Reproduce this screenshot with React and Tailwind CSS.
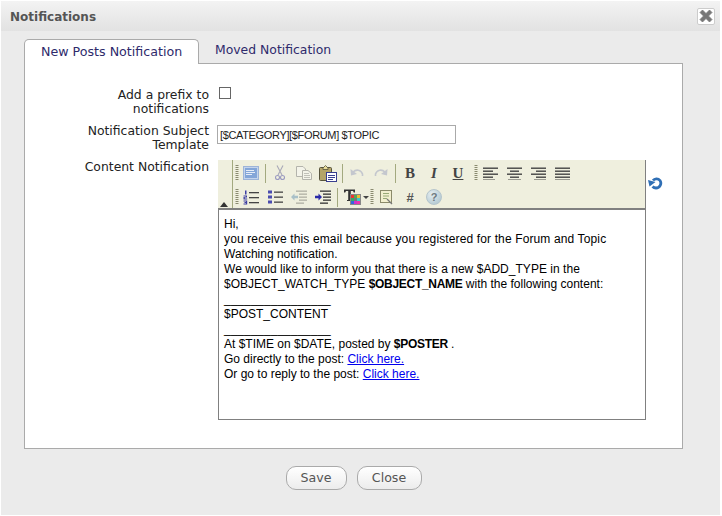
const Grip = () => (
  <svg width="4" height="16" viewBox="0 0 4 16" className="shrink-0">
    {[0, 2, 4, 6, 8, 10, 12, 14].map((y) => (
      <rect key={y} x="0.5" y={y} width="3" height="1" fill="#8a8a70" />
    ))}
  </svg>
);

const Sep = () => <div className="w-px h-[19px] bg-[#a3a97f] mx-[2px] shrink-0" />;

const Btn = ({ children, w = "w-[24px]" }) => (
  <div className={`${w} h-[22px] flex items-center justify-center shrink-0`}>{children}</div>
);

const Lines = ({ rows, color = "#444" }) => (
  <svg width="15" height="13" viewBox="0 0 15 13">
    {rows.map(([x, w], i) => (
      <rect key={i} x={x} y={i * 3 + 0.5} width={w} height="1.4" fill={color} />
    ))}
  </svg>
);

const FULL = [[0, 15], [0, 15], [0, 15], [0, 15], [0, 15]];
const LEFT = [[0, 15], [0, 10], [0, 15], [0, 10], [0, 12]];
const CENTER = [[0, 15], [3, 9], [0, 15], [3, 9], [1, 13]];
const RIGHT = [[0, 15], [5, 10], [0, 15], [5, 10], [3, 12]];

const Source = () => (
  <svg width="16" height="14" viewBox="0 0 16 14">
    <rect x="0.5" y="0.5" width="15" height="13" fill="#c4d4ec" stroke="#9db4d8" />
    <rect x="2" y="2" width="12" height="10" fill="#84a6d8" />
    <rect x="3" y="4" width="8" height="1" fill="#e6edf7" />
    <rect x="3" y="6" width="9" height="1" fill="#e6edf7" />
    <rect x="3" y="8" width="6" height="1" fill="#e6edf7" />
  </svg>
);

const Scissors = () => (
  <svg width="10" height="16" viewBox="0 0 10 16" fill="none" stroke="#a9a9b8" strokeWidth="1.1">
    <path d="M2 0.5 L7 10 M8 0.5 L3 10" />
    <circle cx="2.5" cy="12.5" r="2" stroke="#9a9ac0" />
    <circle cx="7.5" cy="12.5" r="2" stroke="#9a9ac0" />
  </svg>
);

const Copy = () => (
  <svg width="16" height="14" viewBox="0 0 16 14" fill="#f4f4ea" stroke="#b4b4ac">
    <path d="M0.5 0.5 H7 L9.5 3 V10.5 H0.5 Z" />
    <path d="M6.5 4.5 H12 L15.5 7.5 V13.5 H6.5 Z" />
    <path d="M8 7.5 H13 M8 9.5 H14 M8 11.5 H14" strokeWidth="0.8" />
  </svg>
);

const Paste = () => (
  <svg width="18" height="17" viewBox="0 0 18 17">
    <rect x="0.5" y="2.5" width="12" height="13" rx="1" fill="#b4a468" stroke="#56533c" />
    <path d="M4 3 L6.5 0.5 L9 3 V4.5 H4 Z" fill="#e8dc9a" stroke="#56533c" strokeWidth="0.8" />
    <rect x="7.5" y="7.5" width="10" height="9" fill="#fff" stroke="#3a3f8f" />
    <path d="M9 10.5 H16 M9 12.5 H16 M9 14.5 H14" stroke="#3a3f8f" strokeWidth="1" />
  </svg>
);

const Undo = ({ flip }) => (
  <svg width="14" height="10" viewBox="0 0 14 10" fill="none" className={flip ? "-scale-x-100" : ""}>
    <path d="M3 4 C6 1 11 1.500 12.500 6 L12.500 8" stroke="#c4c7ce" strokeWidth="1.600" />
    <path d="M0.500 1 L1 7.500 L7 6 Z" fill="#c4c7ce" />
  </svg>
);

const NumList = () => (
  <svg width="16" height="15" viewBox="0 0 16 15">
    <rect x="2" y="0.500" width="1.500" height="4" fill="#3d3fa3" />
    <path d="M0.500 5.500 H4 V7.500 H1.800 V8.500 H4.200 V9.500 H0.500 V7 H2.800 V6.500 H0.500 Z" fill="#3d3fa3" />
    <path d="M0.500 10.500 H4.200 V14.500 H0.500 V13.500 H3 V13 H1.500 V12 H3 V11.500 H0.500 Z" fill="#3d3fa3" />
    <rect x="6" y="2" width="10" height="1.300" fill="#444" />
    <rect x="6" y="7" width="10" height="1.300" fill="#444" />
    <rect x="6" y="12" width="10" height="1.300" fill="#444" />
  </svg>
);

const BulList = () => (
  <svg width="15" height="14" viewBox="0 0 15 14">
    <rect x="0" y="0.500" width="4" height="3" fill="#4a4caf" />
    <rect x="0" y="5.500" width="4" height="3" fill="#4a4caf" />
    <rect x="0" y="10.500" width="4" height="3" fill="#4a4caf" />
    <rect x="6" y="1.500" width="9" height="1.300" fill="#444" />
    <rect x="6" y="6.500" width="9" height="1.300" fill="#444" />
    <rect x="6" y="11.500" width="9" height="1.300" fill="#444" />
  </svg>
);

const Indent = ({ out }) => {
  const line = out ? "#b0b0a4" : "#333";
  const arrow = out ? "#a9c0c8" : "#2a2aa8";
  return (
    <svg width="16" height="14" viewBox="0 0 16 14">
      <rect x="5" y="0.500" width="11" height="1.300" fill={line} />
      <rect x="8" y="3.500" width="8" height="1.300" fill={line} />
      <rect x="8" y="6.500" width="8" height="1.300" fill={line} />
      <rect x="8" y="9.500" width="8" height="1.300" fill={line} />
      <rect x="5" y="12.500" width="8" height="1.300" fill={line} />
      {out ? (
        <path d="M0 7 L3.500 3.500 V5.800 H7 V8.200 H3.500 V10.500 Z" fill={arrow} />
      ) : (
        <path d="M7 7 L3.500 3.500 V5.800 H0 V8.200 H3.500 V10.500 Z" fill={arrow} />
      )}
    </svg>
  );
};

const TextColor = () => (
  <svg width="17" height="16" viewBox="0 0 17 16">
    <path d="M0 0.500 H11 V3.500 H9.800 L9 2 H6.800 V11 H8 V12 H3 V11 H4.200 V2 H2 L1.200 3.500 H0 Z" fill="#333" />
    <rect x="6" y="5" width="11" height="11" fill="#888" />
    <rect x="7" y="6" width="3" height="3" fill="#e33" />
    <rect x="10" y="6" width="3" height="3" fill="#5a5" />
    <rect x="13" y="6" width="3" height="3" fill="#eb3" />
    <rect x="7" y="9" width="3" height="3" fill="#3a6" />
    <rect x="10" y="9" width="3" height="3" fill="#777" />
    <rect x="13" y="9" width="3" height="3" fill="#3cc" />
    <rect x="7" y="12" width="3" height="3" fill="#36d" />
    <rect x="10" y="12" width="3" height="3" fill="#c3c" />
    <rect x="13" y="12" width="3" height="3" fill="#e3a" />
  </svg>
);

const Template = () => (
  <svg width="13" height="15" viewBox="0 0 13 15">
    <rect x="0.500" y="0.500" width="11" height="12" fill="#f2efcf" stroke="#8b8a6a" />
    <path d="M3 3.500 H9 M3 6 H9 M3 8.500 H7" stroke="#9a7" strokeWidth="1" />
    <path d="M7 9 L12 14" stroke="#777" strokeWidth="1.200" />
  </svg>
);

const Help = () => (
  <div className="w-[16px] h-[16px] rounded-full bg-[radial-gradient(circle_at_35%_30%,#e4edf0,#a9c1cc)] border border-[#b5c5cc] flex items-center justify-center text-[11px] font-bold text-[#6e7a80] font-['Liberation_Sans',sans-serif]">
    ?
  </div>
);

const Refresh = () => (
  <svg width="15" height="13" viewBox="0 0 15 13" fill="none">
    <path d="M5 3.500 C6.500 1.500 10 1 12 3.500 C14 6.500 12 11 8 11 C6.500 11 5.500 10.500 4.500 9.500" stroke="#2f6fb5" strokeWidth="2.800" />
    <path d="M0 3 L7.500 5 L1.500 9.500 Z" fill="#2f6fb5" />
  </svg>
);

const Glyph = ({ children, className }) => (
  <span className={`font-['Liberation_Serif',serif] font-bold text-[15px] leading-none text-[#444] ${className || ""}`}>
    {children}
  </span>
);

function Toolbar() {
  return (
    <div className="relative h-[50px] bg-[#efefde] border-b-2 border-[#808080] pl-[14px]">
      <div className="h-full border-l border-[#a3a97f] pl-[2px] pt-[2px] flex flex-col gap-[2px]">
        <div className="flex items-center h-[22px]">
          <Grip />
          <Btn><Source /></Btn>
          <Sep />
          <Btn><Scissors /></Btn>
          <Btn><Copy /></Btn>
          <Btn><Paste /></Btn>
          <Sep />
          <Btn><Undo /></Btn>
          <Btn><Undo flip /></Btn>
          <Sep />
          <Btn><Glyph>B</Glyph></Btn>
          <Btn><Glyph className="italic">I</Glyph></Btn>
          <Btn><Glyph className="underline">U</Glyph></Btn>
          <div className="ml-[4px]"><Grip /></div>
          <Btn><Lines rows={LEFT} /></Btn>
          <Btn><Lines rows={CENTER} /></Btn>
          <Btn><Lines rows={RIGHT} /></Btn>
          <Btn><Lines rows={FULL} /></Btn>
        </div>
        <div className="flex items-center h-[22px]">
          <Grip />
          <Btn><NumList /></Btn>
          <Btn><BulList /></Btn>
          <Btn><Indent out /></Btn>
          <Btn><Indent /></Btn>
          <Sep />
          <div className="w-[30px] pl-[4px] flex items-center gap-[2px] shrink-0">
            <TextColor />
            <div className="w-0 h-0 border-x-[3px] border-x-transparent border-t-[3px] border-t-[#444]" />
          </div>
          <Grip />
          <Btn><Template /></Btn>
          <Btn><span className="font-['Liberation_Sans',sans-serif] font-bold text-[13px] leading-none text-[#555]">#</span></Btn>
          <Btn><Help /></Btn>
        </div>
      </div>
      <div className="absolute left-[2px] bottom-[1px] w-0 h-0 border-x-[4px] border-x-transparent border-b-[5px] border-b-[#333]" />
    </div>
  );
}

function Editor() {
  return (
    <div className="flex-1 border-r border-[#808080] w-[428px]">
      <Toolbar />
      <div className="h-[210px] border-l border-b border-[#808080] pl-[5px] pt-[7px] font-['Liberation_Sans',sans-serif] text-[12px] leading-[15px] text-black">
        <p>Hi,</p>
        <p className="tracking-[0.13px]">you receive this email because you registered for the Forum and Topic</p>
        <p>Watching notification.</p>
        <p className="tracking-[0.03px]">We would like to inform you that there is a new $ADD_TYPE in the</p>
        <p>$OBJECT_WATCH_TYPE <b className="tracking-[-0.3px]">$OBJECT_NAME</b> with the following content:</p>
        <p>________________</p>
        <p>$POST_CONTENT</p>
        <p>________________</p>
        <p>At $TIME on $DATE, posted by <b className="tracking-[-0.3px]">$POSTER</b> .</p>
        <p>Go directly to the post: <a className="text-[#0000ee] underline">Click here.</a></p>
        <p>Or go to reply to the post: <a className="text-[#0000ee] underline">Click here.</a></p>
      </div>
    </div>
  );
}

export default function App() {
  return (
    <div className="w-[722px] h-[516px] bg-white p-[1px] font-['DejaVu_Sans',sans-serif] overflow-hidden">
      <div className="h-[514px] w-[719px] bg-[#ebebeb] flex flex-col">
        <div className="h-[30px] shrink-0 bg-gradient-to-b from-[#f3f3f3] to-[#e2e2e2] flex items-center justify-between pl-[9px] pr-[5px]">
          <h1 className="text-[12px] font-bold text-[#555] pt-[2px]">Notifications</h1>
          <div className="w-[18px] h-[17px] bg-white border border-[#ccc] rounded-[2px] flex items-center justify-center">
            <svg width="14" height="14" viewBox="0 0 14 14">
              <path d="M1 3.500 L3.500 1 L7 4.500 L10.500 1 L13 3.500 L9.500 7 L13 10.500 L10.500 13 L7 9.500 L3.500 13 L1 10.500 L4.500 7 Z" fill="#777" stroke="#777" strokeWidth="0.800" />
            </svg>
          </div>
        </div>

        <div className="ml-[23px] w-[659px] mt-[7px]">
          <div className="flex h-[25px] items-end text-[12.4px] text-[#2e2a6b]">
            <div className="w-[175px] h-[25px] bg-white border border-b-0 border-[#aaa] rounded-t-[5px] pl-[16px] leading-[24px] text-[12.65px] relative z-10 -mb-px">
              New Posts Notification
            </div>
            <div className="pl-[16px] h-[25px] leading-[24px]">Moved Notification</div>
          </div>
          <div className="h-[386px] bg-white border border-[#aaa] pt-[24px] text-[12.4px] leading-[14px] text-[#222]">
            <div className="flex">
              <div className="w-[184px] pl-[60px] text-right">Add a prefix to notifications</div>
              <input type="checkbox" className="ml-[10px] -mt-px w-[12px] h-[12px] appearance-none bg-white border border-[#666]" />
            </div>
            <div className="flex mt-[8px]">
              <div className="w-[184px] pl-[60px] text-right">Notification Subject Template</div>
              <div className="ml-[8px] mt-px w-[239px] h-[19px] border border-[#aaa] pl-[2px] font-['Liberation_Sans',sans-serif] text-[11px] tracking-[-0.35px] leading-[18px] text-[#222]">
                [$CATEGORY][$FORUM] $TOPIC
              </div>
            </div>
            <div className="flex mt-[8px]">
              <div className="w-[184px] text-right">Content Notification</div>
              <div className="ml-[9px]"><Editor /></div>
              <div className="ml-[2px] mt-[17px]"><Refresh /></div>
            </div>
          </div>
          <div className="flex justify-center gap-[10px] mt-[17px] text-[12.6px] text-[#555]">
            <button className="w-[61px] h-[24px] rounded-[10px] border border-[#aaa] bg-gradient-to-b from-white to-[#ececec]">Save</button>
            <button className="w-[65px] h-[24px] rounded-[10px] border border-[#aaa] bg-gradient-to-b from-white to-[#ececec]">Close</button>
          </div>
        </div>
      </div>
    </div>
  );
}
